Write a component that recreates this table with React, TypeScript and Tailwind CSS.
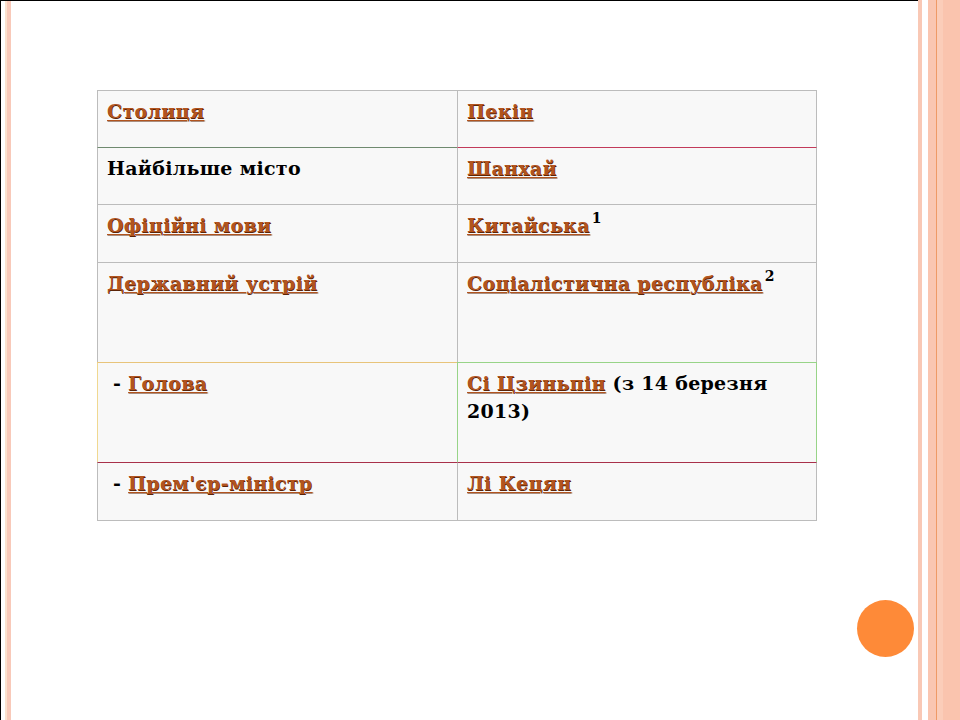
import React from 'react'

// Slide with a fact table about China (Ukrainian)

const serif = { fontFamily: '"DejaVu Serif", "Liberation Serif", serif' }

function L({ children }: { children: React.ReactNode }) {
  return (
    <a className="text-[#b2541e] underline decoration-[#b2541e] decoration-1 underline-offset-2 [text-shadow:0.5px_0.5px_0_#5a2408]">
      {children}
    </a>
  )
}

function Sup({ n }: { n: string }) {
  return <sup className="ml-[2px] text-[14px] text-black relative -top-[9px]">{n}</sup>
}

type Row = {
  left: React.ReactNode
  right: React.ReactNode
  h: string
  leftCell?: string
  rightCell?: string
}

const rows: Row[] = [
  { left: <L>Столиця</L>, right: <L>Пекін</L>, h: 'h-[57px]' },
  {
    left: 'Найбільше місто',
    right: <L>Шанхай</L>,
    h: 'h-[57px]',
    leftCell: 'border-t-[#6f8a6f]',
    rightCell: 'border-t-[#c23a5a]',
  },
  {
    left: <L>Офіційні мови</L>,
    right: (
      <>
        <L>Китайська</L>
        <Sup n="1" />
      </>
    ),
    h: 'h-[58px]',
  },
  {
    left: <L>Державний устрій</L>,
    right: (
      <>
        <L>Соціалістична республіка</L>
        <Sup n="2" />
      </>
    ),
    h: 'h-[100px]',
  },
  {
    left: (
      <span className="pl-[6px]">
        - <L>Голова</L>
      </span>
    ),
    right: (
      <>
        <L>Сі Цзиньпін</L> (з 14 березня
        <br />
        2013)
      </>
    ),
    h: 'h-[100px]',
    leftCell: 'border-t-[#e8c47a] border-l-[#f0d890]',
    rightCell: 'border-t-[#98d488] border-l-[#98d488] border-r-[#98d488]',
  },
  {
    left: (
      <span className="pl-[6px]">
        - <L>Прем'єр-міністр</L>
      </span>
    ),
    right: <L>Лі Кецян</L>,
    h: 'h-[58px]',
    leftCell: 'border-t-[#a8304a]',
    rightCell: 'border-t-[#a8304a]',
  },
]

export default function App() {
  return (
    <div className="relative flex w-[960px] h-[720px] bg-white overflow-hidden" style={serif}>
      {/* left stripes */}
      <div className="flex h-full border-t border-black">
        <div className="w-[1px] bg-black" />
        <div className="w-[4px]" />
        <div className="w-[2px] bg-[#fbe2cf]" />
        <div className="w-[4px] bg-[#f8c9b9]" />
      </div>

      {/* main */}
      <div className="flex-1 border-t border-black pl-[86px] pt-[89px]">
        <div className="w-[720px] border-b border-[#bcbcbc] bg-[#f8f8f8] text-black">
          {rows.map((r, i) => (
            <div key={i} className={`grid grid-cols-[360px_360px] ${r.h}`}>
              <div
                className={`border-t border-l border-[#bcbcbc] pl-[9px] pt-[6px] text-[19px] leading-[28px] font-bold tracking-[0.3px] ${r.leftCell ?? ''}`}
              >
                {r.left}
              </div>
              <div
                className={`border-t border-l border-r border-[#bcbcbc] pl-[9px] pr-[30px] pt-[6px] text-[19px] leading-[28px] font-bold tracking-[0.3px] ${r.rightCell ?? ''}`}
              >
                {r.right}
              </div>
            </div>
          ))}
        </div>
      </div>

      {/* right stripes */}
      <div className="flex h-full">
        <div className="w-[4px] bg-[#f9c8b5]" />
        <div className="w-[6px] bg-white" />
        <div className="w-[8px] bg-[#fac6b1]" />
        <div className="w-[1px] bg-[#ef9a66]" />
        <div className="w-[6px] bg-[#fbcdb9]" />
        <div className="w-[17px] bg-[#fac4ae]" />
      </div>

      {/* orange dot */}
      <div className="absolute left-[857px] top-[600px] w-[57px] h-[57px] rounded-full bg-[#fe8a38]" />
    </div>
  )
}
